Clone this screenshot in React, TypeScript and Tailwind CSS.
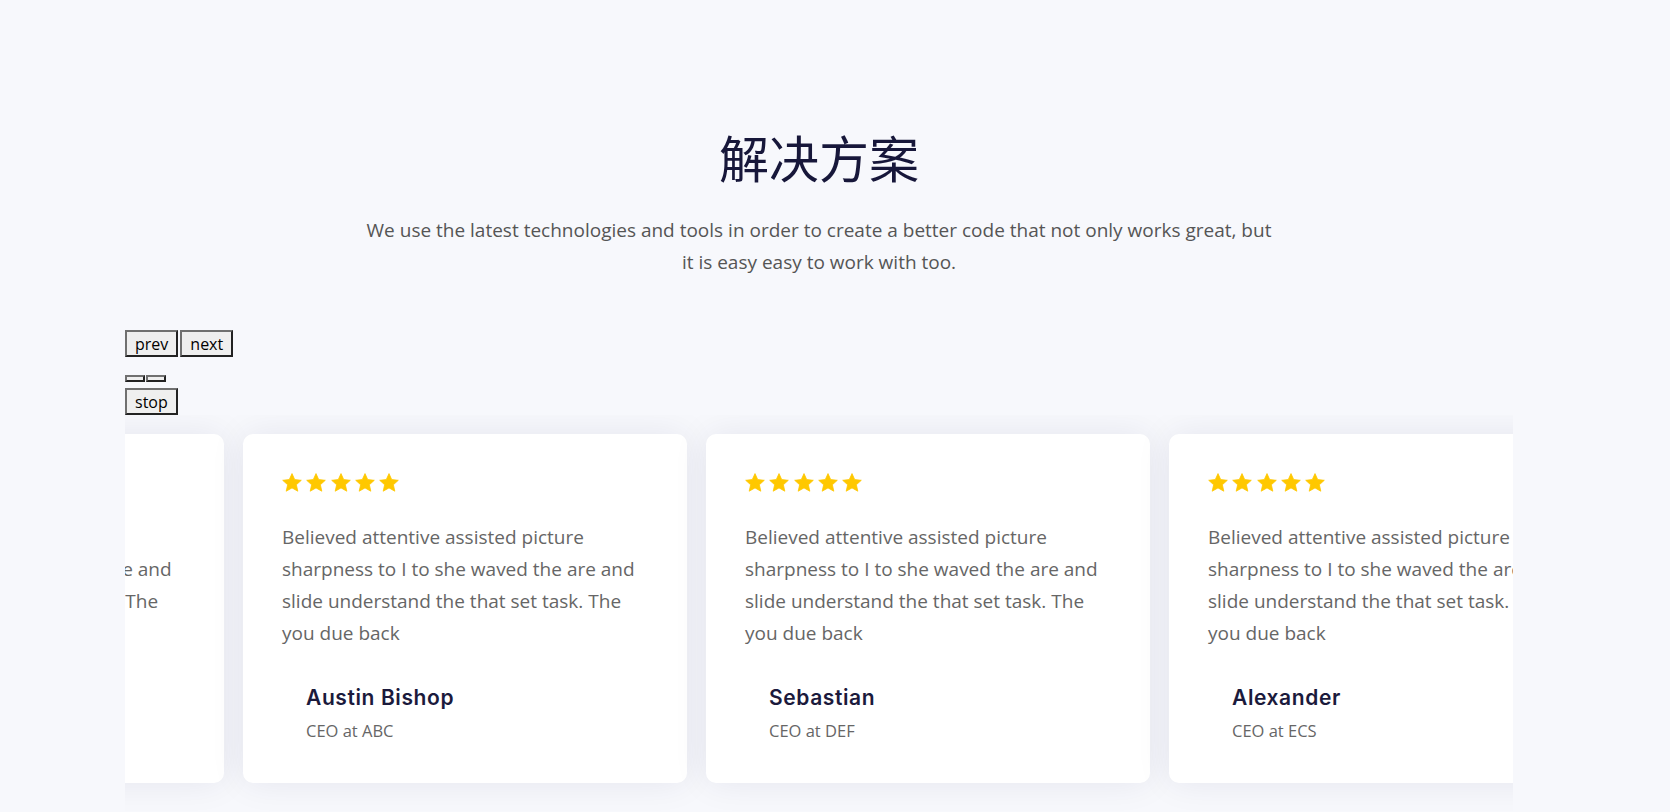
import React from "react";

const LINES = [
  "Believed attentive assisted picture",
  "sharpness to I to she waved the are and",
  "slide understand the that set task. The",
  "you due back",
];

const cards = [
  { name: "Michael Scott", role: "CEO at XYZ" },
  { name: "Austin Bishop", role: "CEO at ABC" },
  { name: "Sebastian", role: "CEO at DEF" },
  { name: "Alexander", role: "CEO at ECS" },
];

function Star() {
  return (
    <svg width="20" height="19" viewBox="0 0 20 19" className="block">
      <path
        d="M10 0.6 L12.704 6.579 L19.3 7.3 L14.375 11.721 L15.8 18.2 L10 14.9 L4.2 18.2 L5.625 11.721 L0.7 7.3 L7.296 6.579 Z"
        fill="#ffc800"
        stroke="#ffc800"
        strokeWidth="0.8"
        strokeLinejoin="round"
      />
    </svg>
  );
}

function Card({ name, role }: { name: string; role: string }) {
  return (
    <div className="w-[444px] h-[349px] shrink-0 rounded-[10px] bg-white px-[39px] pt-[39px] shadow-[0_0_35px_rgba(25,30,80,0.08)]">
      <div className="flex gap-[4.3px] h-[19px]">
        <Star />
        <Star />
        <Star />
        <Star />
        <Star />
      </div>
      <p className="mt-[29px] text-[19px] leading-[32px] text-[#666666] whitespace-nowrap">
        {LINES.map((l, i) => (
          <React.Fragment key={i}>
            {l}
            {i < LINES.length - 1 ? <br /> : null}
          </React.Fragment>
        ))}
      </p>
      <div className="ml-[24px] mt-[37px]">
        <div className="font-['Inter',sans-serif] font-semibold text-[21px] tracking-[0.6px] leading-[24px] text-[#1b1a3c]">
          {name}
        </div>
        <div className="mt-[9px] text-[16.5px] leading-[24px] text-[#666666]">{role}</div>
      </div>
    </div>
  );
}

const btnBorder =
  "border-2 border-solid border-t-[#707070] border-l-[#707070] border-r-[#222222] border-b-[#222222] bg-[#efefef]";
const btn = "h-[27px] px-[8px] text-[16px] leading-none text-black " + btnBorder;

export default function App() {
  return (
    <div className="min-h-screen bg-[#f7f8fc] font-['Open_Sans','Noto_Sans',sans-serif] overflow-hidden">
      <div className="ml-[125px] w-[1388px]">
        <h1 className="pt-[126px] h-[186px] text-center text-[50px] leading-[60px] font-normal text-[#17173a] font-['Noto_Sans_CJK_SC','Noto_Sans_CJK_JP',sans-serif]">
          解决方案
        </h1>
        <p className="mx-auto mt-[28px] max-w-[912px] text-center text-[19px] leading-[32px] text-[#555555]">
          We use the latest technologies and tools in order to create a better code that not only works great, but it is easy easy to work with too.
        </p>

        <div className="mt-[52px] flex">
          <button className={btn}>prev</button>
          <button className={btn + " ml-[2px]"}>next</button>
        </div>
        <div className="mt-[18px] flex">
          <button className={"h-[7px] w-[20px] " + btnBorder}></button>
          <button className={"ml-[1px] h-[7px] w-[20px] " + btnBorder}></button>
        </div>
        <div className="mt-[6px] flex">
          <button className={btn}>stop</button>
        </div>

        <div className="overflow-hidden pt-[19px] pb-[40px]">
          <div className="flex gap-[19px] ml-[-345px]">
            {cards.map((c) => (
              <Card key={c.name} name={c.name} role={c.role} />
            ))}
          </div>
        </div>
      </div>
    </div>
  );
}
